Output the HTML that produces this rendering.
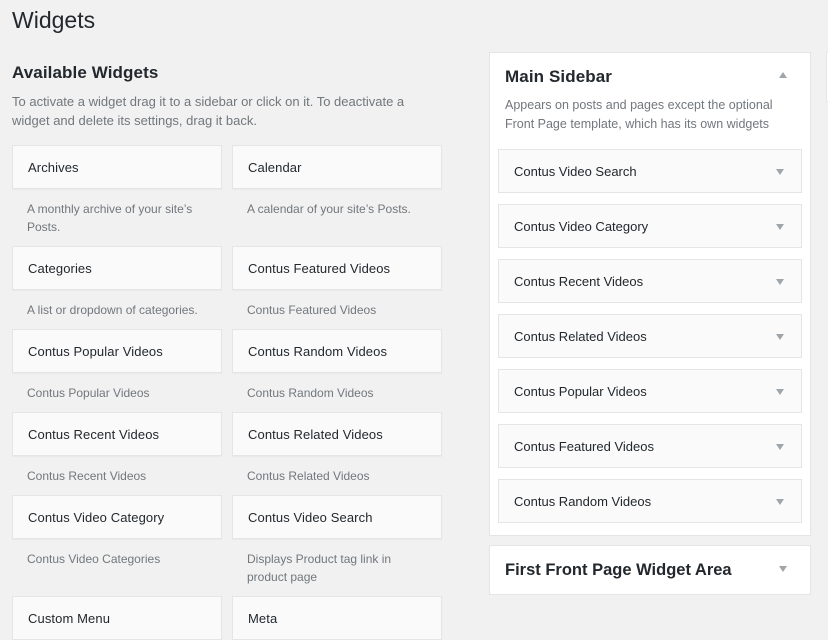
<!DOCTYPE html>
<html><head><style>
body{margin:0;width:828px;height:616px;overflow:hidden;background:#f1f1f1;font-family:"Liberation Sans",sans-serif;color:#23282d;position:relative}
.a{position:absolute}
.w{position:absolute;width:208px;height:42px;background:#fafafa;border:1px solid #e5e5e5;box-shadow:0 1px 1px rgba(0,0,0,.04)}
.w span{position:absolute;left:15px;top:14px;font-size:13px;color:#23282d;letter-spacing:0.1px}
.d{position:absolute;font-size:12px;color:#72777c;line-height:18px;width:180px}
.s{position:absolute;left:498px;width:302px;height:42px;background:#fafafa;border:1px solid #e5e5e5}
.s span{position:absolute;left:15px;top:14px;font-size:13px}
.tri{position:absolute;width:0;height:0;border-left:4px solid transparent;border-right:4px solid transparent;border-top:6px solid #a0a5aa}
</style></head><body>
<div class="a" style="left:12px;top:7px;font-size:23px;color:#23282d">Widgets</div>
<div class="a" style="left:12px;top:63px;font-size:17px;font-weight:bold;letter-spacing:0.1px">Available Widgets</div>
<div class="a" style="left:12px;top:92px;font-size:13px;color:#72777c;line-height:19px;width:420px">To activate a widget drag it to a sidebar or click on it. To deactivate a widget and delete its settings, drag it back.</div>

<div class="w" style="left:12px;top:145px"><span>Archives</span></div>
<div class="w" style="left:232px;top:145px"><span>Calendar</span></div>
<div class="d" style="left:27px;top:200px">A monthly archive of your site’s Posts.</div>
<div class="d" style="left:247px;top:200px">A calendar of your site’s Posts.</div>

<div class="w" style="left:12px;top:246px"><span>Categories</span></div>
<div class="w" style="left:232px;top:246px"><span>Contus Featured Videos</span></div>
<div class="d" style="left:27px;top:301px;width:200px">A list or dropdown of categories.</div>
<div class="d" style="left:247px;top:301px">Contus Featured Videos</div>

<div class="w" style="left:12px;top:329px"><span>Contus Popular Videos</span></div>
<div class="w" style="left:232px;top:329px"><span>Contus Random Videos</span></div>
<div class="d" style="left:27px;top:384px">Contus Popular Videos</div>
<div class="d" style="left:247px;top:384px">Contus Random Videos</div>

<div class="w" style="left:12px;top:412px"><span>Contus Recent Videos</span></div>
<div class="w" style="left:232px;top:412px"><span>Contus Related Videos</span></div>
<div class="d" style="left:27px;top:467px">Contus Recent Videos</div>
<div class="d" style="left:247px;top:467px">Contus Related Videos</div>

<div class="w" style="left:12px;top:495px"><span>Contus Video Category</span></div>
<div class="w" style="left:232px;top:495px"><span>Contus Video Search</span></div>
<div class="d" style="left:27px;top:550px">Contus Video Categories</div>
<div class="d" style="left:247px;top:550px;width:170px">Displays Product tag link in product page</div>

<div class="w" style="left:12px;top:596px"><span>Custom Menu</span></div>
<div class="w" style="left:232px;top:596px"><span>Meta</span></div>

<div class="a" style="left:489px;top:52px;width:320px;height:482px;background:#fff;border:1px solid #e5e5e5"></div>
<div class="a" style="left:826px;top:52px;width:10px;height:48px;background:#fff;border:1px solid #e5e5e5"></div>
<div class="a" style="left:505px;top:67px;font-size:17px;font-weight:bold;letter-spacing:0.1px">Main Sidebar</div>
<div class="tri" style="left:779px;top:72px;border-top:none;border-bottom:6px solid #a0a5aa"></div>
<div class="a" style="left:505px;top:96px;font-size:12.5px;color:#72777c;line-height:19px;width:300px">Appears on posts and pages except the optional Front Page template, which has its own widgets</div>

<div class="s" style="top:149px"><span>Contus Video Search</span><div class="tri" style="left:277px;top:19px"></div></div>
<div class="s" style="top:204px"><span>Contus Video Category</span><div class="tri" style="left:277px;top:19px"></div></div>
<div class="s" style="top:259px"><span>Contus Recent Videos</span><div class="tri" style="left:277px;top:19px"></div></div>
<div class="s" style="top:314px"><span>Contus Related Videos</span><div class="tri" style="left:277px;top:19px"></div></div>
<div class="s" style="top:369px"><span>Contus Popular Videos</span><div class="tri" style="left:277px;top:19px"></div></div>
<div class="s" style="top:424px"><span>Contus Featured Videos</span><div class="tri" style="left:277px;top:19px"></div></div>
<div class="s" style="top:479px"><span>Contus Random Videos</span><div class="tri" style="left:277px;top:19px"></div></div>

<div class="a" style="left:489px;top:545px;width:320px;height:48px;background:#fff;border:1px solid #e5e5e5"></div>
<div class="a" style="left:505px;top:561px;font-size:16.5px;font-weight:bold">First Front Page Widget Area</div>
<div class="tri" style="left:779px;top:566px"></div>
</body></html>
